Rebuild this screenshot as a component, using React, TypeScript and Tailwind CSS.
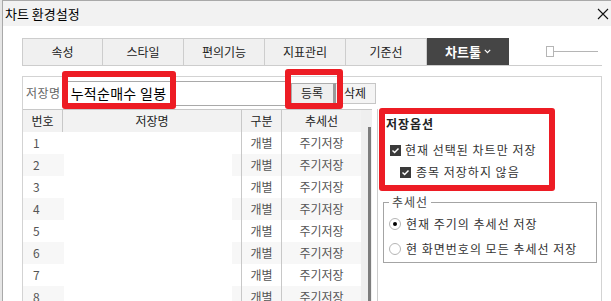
import React from 'react';

const rows = [1, 2, 3, 4, 5, 6, 7, 8];
const tabs = ['속성', '스타일', '편의기능', '지표관리', '기준선'];

function CheckBox() {
  return (
    <span className="flex h-[11px] w-[11px] shrink-0 items-center justify-center bg-[#3a3a3a]">
      <svg width="9" height="9" viewBox="0 0 9 9">
        <path d="M1.5 4.6 L3.6 6.6 L7.5 2.4" fill="none" stroke="#fff" strokeWidth="1.4" />
      </svg>
    </span>
  );
}

function Radio({ on }: { on?: boolean }) {
  return (
    <span className="flex h-[12px] w-[12px] shrink-0 items-center justify-center rounded-full border border-[#b5b5b5] bg-white">
      {on && <span className="h-[4px] w-[4px] rounded-full bg-black" />}
    </span>
  );
}

export default function App() {
  return (
    <div className="relative flex h-[301px] w-[611px] overflow-hidden bg-white font-['Noto_Sans_CJK_KR',sans-serif] text-[12px] leading-[16px] text-[#222]">
      {/* chart behind the dialog */}
      <div className="w-[2px] shrink-0 bg-[#e6e6e6]" />

      <div className="flex min-h-0 flex-1 flex-col border-l border-t border-[#a9a9a9]">
        {/* title bar */}
        <div className="flex h-[25px] shrink-0 items-center justify-between bg-[#f2f2f2] pl-[2px] pr-[2px]">
          <span className="text-[13px] text-black">차트 환경설정</span>
          <svg width="12" height="12" viewBox="0 0 12 12">
            <path d="M1 1 L11 11 M11 1 L1 11" stroke="#111" strokeWidth="1.1" />
          </svg>
        </div>

        <div className="flex min-h-0 flex-1 flex-col bg-white pl-[19px] pr-[9px] pt-[12px]">
          {/* tabs */}
          <div className="flex h-[28px] shrink-0">
            {tabs.map((t, i) => (
              <div
                key={t}
                className={
                  'flex w-[81px] items-center justify-center border-y border-r border-[#cdcdcd] bg-[#f0f0f0] text-[#222] ' +
                  (i === 0 ? 'border-l' : '')
                }
              >
                {t}
              </div>
            ))}
            <div className="flex w-[82px] items-center justify-center gap-[3px] border-b border-[#cdcdcd] bg-[#454545] text-[13px] font-bold text-white">
              차트툴
              <svg width="7" height="5" viewBox="0 0 7 5">
                <path d="M0.8 0.8 L3.5 3.6 L6.2 0.8" fill="none" stroke="#fff" strokeWidth="1.2" />
              </svg>
            </div>
            <div className="flex flex-1 items-center justify-end border-b border-[#cdcdcd] pr-[4px]">
              <div className="h-[11px] w-[8px] border border-[#b5b5b5] bg-white" />
              <div className="h-px w-[44px] bg-[#b5b5b5]" />
            </div>
          </div>

          {/* panel */}
          <div className="mt-[10px] flex min-h-0 flex-1 flex-col overflow-hidden border border-b-0 border-[#d3d3d3]">
            <div className="flex h-[32px] shrink-0 items-center pl-[3px]">
              <span className="tracking-[0.5px] text-[#666]">저장명</span>
              <div className="ml-[5px] flex h-[25px] w-[221px] items-center border border-[#a9a9a9] pl-[4px] text-[14px] tracking-[0.3px] text-black">
                누적순매수 일봉
              </div>
              <div className="ml-[4px] flex h-[21px] w-[45px] items-center justify-center border border-[#adadad] border-r-[3px] border-r-[#9a9a9a] bg-[#efefef]">
                등록
              </div>
              <div className="flex h-[21px] w-[40px] items-center justify-center border border-l-0 border-[#c6c6c6] bg-[#f4f4f4]">
                삭제
              </div>
            </div>

            <div className="flex min-h-0 flex-1">
              {/* table */}
              <div className="flex w-[338px] shrink-0 flex-col border-t border-[#c8c8c8]">
                <div className="flex h-[22px] shrink-0 bg-[#f2f2f2]">
                  <div className="flex w-[39px] items-center justify-center">번호</div>
                  <div className="flex w-[179px] items-center justify-center border-l border-[#c8c8c8]">저장명</div>
                  <div className="flex w-[40px] items-center justify-center border-l border-[#c8c8c8]">구분</div>
                  <div className="flex w-[80px] items-center justify-center border-l border-[#c8c8c8]">추세선</div>
                </div>
                {rows.map((n) => (
                  <div key={n} className={'flex h-[22px] shrink-0 text-[#555] ' + (n % 2 === 0 ? 'bg-[#f7f7f7]' : 'bg-white')}>
                    <div className="flex w-[39px] items-center pl-[10px]">{n}</div>
                    <div className="flex w-[179px] pl-[2px] pr-[9px]">
                      <div className="flex-1 bg-white" />
                    </div>
                    <div className="flex w-[40px] items-center justify-center border-l border-[#c8c8c8]">개별</div>
                    <div className="flex w-[80px] items-center justify-center border-l border-[#c8c8c8]">주기저장</div>
                  </div>
                ))}
              </div>

              {/* scrollbar */}
              <div className="flex w-[11px] shrink-0 flex-col border-t border-[#c8c8c8] bg-[#efefef] pl-[7px] pt-[17px]">
                <div className="w-[3px] flex-1 bg-[#7d7d7d]" />
              </div>
              <div className="w-[5px] shrink-0" />

              {/* save options */}
              <div className="flex flex-1 flex-col border-l border-[#cdcdcd] tracking-[1px] text-[#333]">
                <div className="mt-[7px] shrink-0 pl-[8px] font-bold text-[#222]">저장옵션</div>
                <div className="mt-[10px] flex shrink-0 items-center gap-[4px] pl-[12px]">
                  <CheckBox />
                  <span>현재 선택된 차트만 저장</span>
                </div>
                <div className="mt-[6px] flex shrink-0 items-center gap-[5px] pl-[22px]">
                  <CheckBox />
                  <span>종목 저장하지 않음</span>
                </div>
                <div className="relative ml-[5px] mt-[22px] flex h-[61px] w-[214px] shrink-0 flex-col gap-[9px] border border-[#a4a4a4] pl-[5px] pt-[13px]">
                  <span className="absolute -top-[9px] left-[5px] bg-white px-[3px] text-[#444]">추세선</span>
                  <div className="flex items-center gap-[5px]">
                    <Radio on />
                    <span>현재 주기의 추세선 저장</span>
                  </div>
                  <div className="flex items-center gap-[5px]">
                    <Radio />
                    <span>현 화면번호의 모든 추세선 저장</span>
                  </div>
                </div>
              </div>
            </div>
          </div>
        </div>
      </div>

      {/* red highlight annotations */}
      <div className="absolute left-[62px] top-[71px] h-[38px] w-[114px] rounded-[3px] border-[6px] border-[#ed1c24]" />
      <div className="absolute left-[285px] top-[69px] h-[40px] w-[58px] rounded-[3px] border-[6px] border-[#ed1c24]" />
      <div className="absolute left-[379px] top-[108px] h-[83px] w-[176px] rounded-[3px] border-[6px] border-[#ed1c24]" />
    </div>
  );
}
